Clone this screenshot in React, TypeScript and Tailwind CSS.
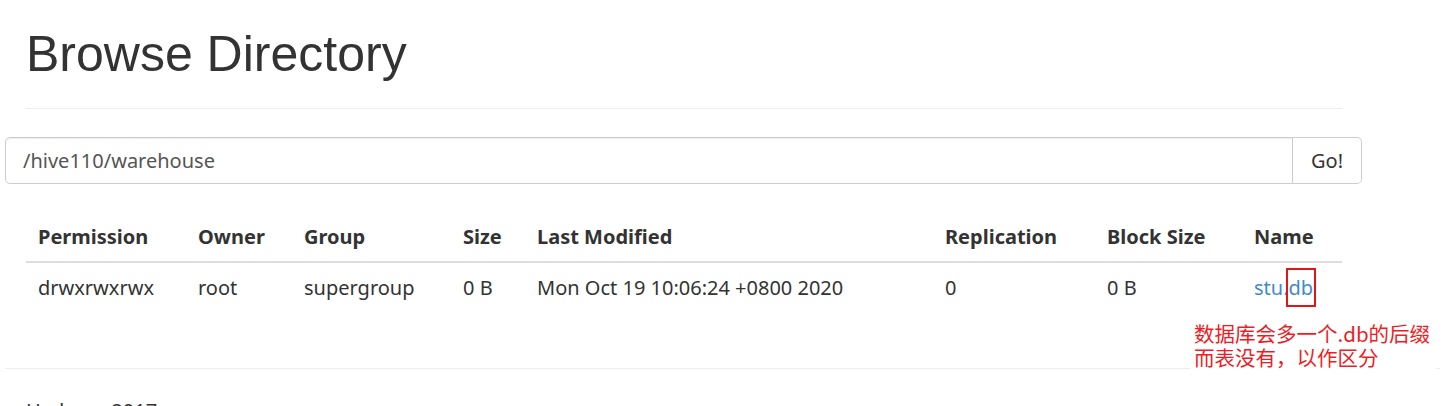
import React from "react";

const cols = ["Permission", "Owner", "Group", "Size", "Last Modified", "Replication", "Block Size", "Name"];
const row = ["drwxrwxrwx", "root", "supergroup", "0 B", "Mon Oct 19 10:06:24 +0800 2020", "0", "0 B"];

export default function App() {
  return (
    <div className="relative w-[1450px] h-[406px] overflow-hidden bg-white text-[#333] font-['Noto_Sans','Noto_Sans_CJK_SC',sans-serif] text-[20px]">
      <div className="ml-[26px] w-[1316px] pt-[26px] pb-[26px] border-b border-[#eee]">
        <h1 className="text-[50px] leading-[56px] font-normal font-['Liberation_Sans',Arial,sans-serif] text-[#333]">
          Browse Directory
        </h1>
      </div>

      <div className="mt-[28px] ml-[5px] w-[1357px] h-[47px] flex">
        <div className="flex-1 flex items-center border border-[#ccc] rounded-l-[5px] px-[17px] text-[#555] shadow-[inset_0_1px_1px_rgba(0,0,0,0.075)]">
          /hive110/warehouse
        </div>
        <div className="w-[69px] flex items-center justify-center border border-l-0 border-[#ccc] rounded-r-[5px] text-[#333]">
          Go!
        </div>
      </div>

      <div className="mt-[29px] ml-[26px] w-[1316px]">
        <div className="grid grid-cols-[160px_106px_159px_74px_408px_162px_147px_100px] h-[50px] items-center border-b-2 border-[#ddd] font-bold">
          {cols.map((c) => (
            <div key={c} className="px-[12px] whitespace-nowrap">{c}</div>
          ))}
        </div>
        <div className="grid grid-cols-[160px_106px_159px_74px_408px_162px_147px_100px] h-[50px] items-center">
          {row.map((c, i) => (
            <div key={i} className="px-[12px] whitespace-nowrap">{c}</div>
          ))}
          <div className="px-[12px] whitespace-nowrap text-[#428bca]">stu.db</div>
        </div>
      </div>

      <div className="mt-[55px] ml-[5px] w-[1435px] border-t border-[#eee]" />
      <div className="ml-[26px] mt-[28px] leading-[28px]">Hadoop, 2017.</div>

      <div className="absolute left-[1286px] top-[268px] w-[30px] h-[39px] border-2 border-[#e3141c]" />
      <div className="absolute left-[1190px] top-[321px] bg-white pl-[4px] pr-[6px] text-[#ee1c25] text-[20.5px] leading-[24px] font-['Noto_Sans_CJK_SC',sans-serif]">
        <div>数据库会多一个.db的后缀</div>
        <div>而表没有，以作区分</div>
      </div>
    </div>
  );
}
